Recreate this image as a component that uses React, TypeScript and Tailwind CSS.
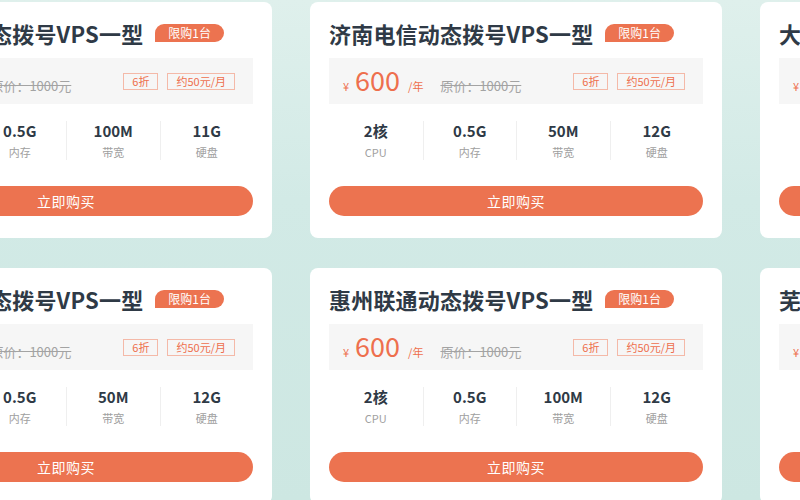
type Spec = { value: string; label: string };

type Plan = {
  title: string;
  specs: Spec[];
};

const cpu = (v: string): Spec => ({ value: v, label: "CPU" });
const mem = (v: string): Spec => ({ value: v, label: "内存" });
const bw = (v: string): Spec => ({ value: v, label: "带宽" });
const disk = (v: string): Spec => ({ value: v, label: "硬盘" });

const rows: Plan[][] = [
  [
    { title: "青岛电信动态拨号VPS一型", specs: [cpu("2核"), mem("0.5G"), bw("100M"), disk("11G")] },
    { title: "济南电信动态拨号VPS一型", specs: [cpu("2核"), mem("0.5G"), bw("50M"), disk("12G")] },
    { title: "大连联通动态拨号VPS一型", specs: [cpu("2核"), mem("0.5G"), bw("50M"), disk("12G")] },
  ],
  [
    { title: "广州联通动态拨号VPS一型", specs: [cpu("2核"), mem("0.5G"), bw("50M"), disk("12G")] },
    { title: "惠州联通动态拨号VPS一型", specs: [cpu("2核"), mem("0.5G"), bw("100M"), disk("12G")] },
    { title: "芜湖电信动态拨号VPS一型", specs: [cpu("2核"), mem("0.5G"), bw("50M"), disk("12G")] },
  ],
];

function PlanCard({ plan }: { plan: Plan }) {
  return (
    <div className="w-[412px] shrink-0 rounded-[8px] bg-white px-[19px] pb-[22px] pt-[18px]">
      <div className="flex h-[26px] items-center">
        <h3 className="text-[22px] font-bold leading-[26px] tracking-[0.2px] text-[#2f3a46]">{plan.title}</h3>
        <span className="ml-[12px] flex h-[18px] items-center rounded-[10px] rounded-bl-none bg-[#ec7350] px-[13px] text-[12px] leading-none text-white">
          限购1台
        </span>
      </div>

      <div className="mt-[12px] flex h-[46px] items-center bg-[#f6f6f6] pl-[14px] pr-[18px]">
        <div className="flex items-baseline">
          <span className="text-[11px] text-[#ee6f4d]">¥</span>
          <span className="ml-[6px] text-[27px] leading-none text-[#ee6f4d]">600</span>
          <span className="ml-[8px] text-[11px] text-[#ee6f4d]">/年</span>
          <span className="ml-[17px] text-[13px] text-[#a3a3a3] line-through">原价：1000元</span>
        </div>
        <div className="ml-auto flex gap-[9px]">
          <span className="flex h-[17px] items-center border border-[#f4b9a8] px-[8px] text-[11px] leading-none text-[#ee6f4d]">
            6折
          </span>
          <span className="flex h-[17px] items-center border border-[#f4b9a8] px-[8px] text-[11px] leading-none text-[#ee6f4d]">
            约50元/月
          </span>
        </div>
      </div>

      <div className="mt-[17px] grid grid-cols-4">
        {plan.specs.map((s, i) => (
          <div
            key={s.label}
            className={`flex flex-col items-center ${i > 0 ? "border-l border-[#efefef]" : ""}`}
          >
            <span className="text-[15px] font-bold leading-[20px] text-[#2f3a46]">{s.value}</span>
            <span className="mt-[3px] text-[11px] leading-[16px] text-[#a0a0a0]">{s.label}</span>
          </div>
        ))}
      </div>

      <button
        type="button"
        className="mt-[26px] flex h-[30px] w-full items-center justify-center rounded-full bg-[#ec7350] text-[14px] tracking-[0.5px] text-white"
      >
        立即购买
      </button>
    </div>
  );
}

export default function App() {
  return (
    <div
      className="h-[500px] w-[800px] overflow-hidden bg-[linear-gradient(180deg,#dff0ec_0%,#d2eae6_40%,#cde7e2_100%)] pt-[2px]"
      style={{ fontFamily: '"Noto Sans CJK SC", "Noto Sans", sans-serif' }}
    >
      <div className="ml-[-140px] flex flex-col gap-[30px]">
        {rows.map((row, r) => (
          <div key={r} className="flex gap-[38px]">
            {row.map((plan) => (
              <PlanCard key={plan.title} plan={plan} />
            ))}
          </div>
        ))}
      </div>
    </div>
  );
}
